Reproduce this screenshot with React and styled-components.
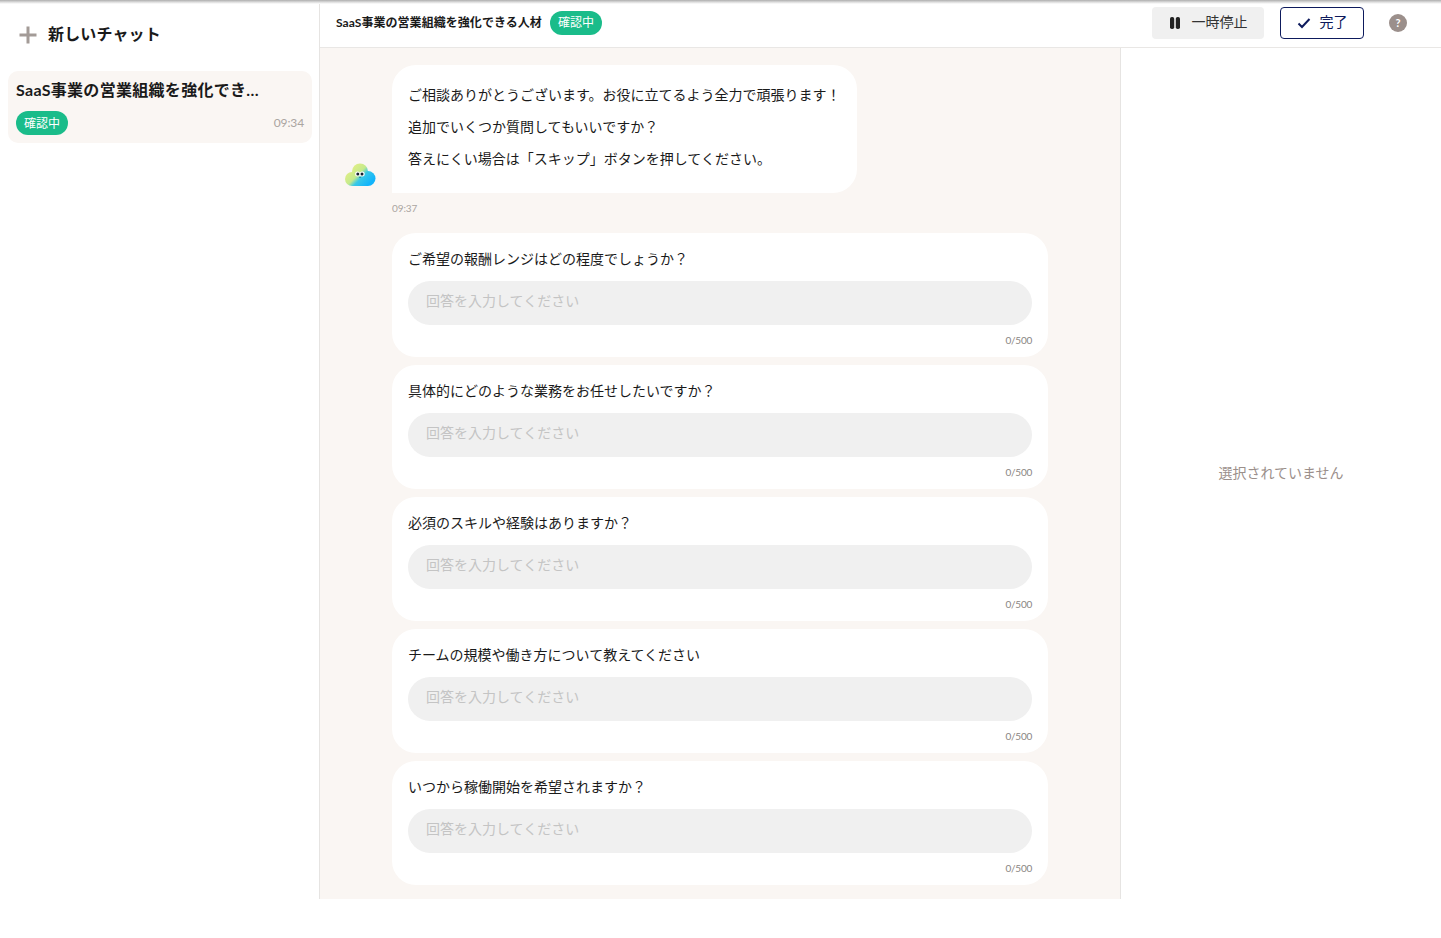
import React from "react";
import styled, { createGlobalStyle } from "styled-components";

const Global = createGlobalStyle`
  html, body { margin: 0; padding: 0; background: #fff; }
  body { font-family: Lato, "Noto Sans CJK JP", sans-serif; color: #1a1a1a; }
  * { box-sizing: border-box; }
`;

const Page = styled.div`
  width: 1441px;
  height: 938px;
  position: relative;
  background: #fff;
`;
const TopShade = styled.div`
  position: absolute;
  inset: 0 0 auto 0;
  height: 4px;
  background: linear-gradient(#aeaeae, #dedede 55%, #fff);
  z-index: 2;
`;
const Shell = styled.div`
  display: flex;
  height: 899px;
`;
const Sidebar = styled.aside`
  width: 320px;
  flex: none;
  border-right: 1px solid #e6e4e2;
  padding: 0 8px;
`;
const NewChat = styled.div`
  height: 71px;
  display: flex;
  align-items: center;
  gap: 10px;
  padding: 0 0 6px 10px;
  font-size: 16px;
  font-weight: 700;
  letter-spacing: 0.15px;
  color: #1a1a1a;
`;
const PlusSlot = styled.span`
  display: flex;
  margin-top: 4px;
`;
const ThreadCard = styled.div`
  height: 72px;
  width: 304px;
  border-radius: 10px;
  background: #faf6f3;
  padding: 8px;
`;
const ThreadTitle = styled.div`
  font-size: 16px;
  font-weight: 700;
  line-height: 22px;
  letter-spacing: 0.3px;
  white-space: nowrap;
`;
const ThreadMeta = styled.div`
  display: flex;
  align-items: center;
  justify-content: space-between;
  margin-top: 10px;
`;
const Time = styled.span`
  font-size: 12px;
  letter-spacing: -0.1px;
  padding-bottom: 2px;
  color: #aaa5a1;
`;
const Badge = styled.span`
  display: inline-flex;
  align-items: center;
  justify-content: center;
  width: 52px;
  height: 24px;
  padding-bottom: 2px;
  border-radius: 12px;
  background: #1abc8a;
  color: #fff;
  font-size: 12px;
`;
const Main = styled.main`
  flex: 1;
  display: flex;
  flex-direction: column;
  min-width: 0;
`;
const Header = styled.header`
  height: 48px;
  flex: none;
  border-bottom: 1px solid #e9e7e5;
  display: flex;
  align-items: center;
  padding: 0 0 2px 16px;
`;
const HeaderTitle = styled.div`
  font-size: 12px;
  font-weight: 700;
  margin-right: 8px;
  padding-bottom: 2px;
  letter-spacing: 0.05px;
`;
const Spacer = styled.div`
  flex: 1;
`;
const PauseButton = styled.div`
  width: 112px;
  height: 32px;
  background: #f0f0f0;
  border-radius: 4px;
  display: flex;
  align-items: center;
  justify-content: center;
  gap: 11px;
  font-size: 14px;
  color: #333;
  margin-right: 16px;
`;
const DoneButton = styled.div`
  width: 84px;
  height: 32px;
  border: 1px solid #0d1a5c;
  border-radius: 4px;
  display: flex;
  align-items: center;
  justify-content: center;
  gap: 9px;
  font-size: 14px;
  color: #0d1a5c;
  margin-right: 25px;
`;
const ButtonLabel = styled.span`
  padding-bottom: 4px;
`;
const HelpIcon = styled.div`
  width: 18px;
  height: 18px;
  border-radius: 50%;
  background: #9b8f8b;
  color: #fff;
  font-size: 11px;
  font-weight: 700;
  display: flex;
  align-items: center;
  justify-content: center;
  margin-right: 34px;
`;
const Body = styled.div`
  flex: 1;
  display: flex;
  min-height: 0;
`;
const Chat = styled.section`
  width: 801px;
  background: #faf6f3;
  border-right: 1px solid #e6e4e2;
  padding: 17px 0 0 24px;
`;
const BotRow = styled.div`
  display: flex;
  align-items: flex-end;
  gap: 16px;
`;
const Bubble = styled.div`
  width: 465px;
  height: 128px;
  background: #fff;
  border-radius: 24px 24px 24px 0;
  padding: 14px 16px;
  font-size: 14px;
  line-height: 32px;
  color: #1a1a1a;
`;
const BubbleTime = styled.div`
  margin: 9px 0 0 48px;
  height: 12px;
  line-height: 12px;
  font-size: 10px;
  letter-spacing: -0.1px;
  color: #aaa5a1;
`;
const Questions = styled.div`
  margin: 19px 0 0 48px;
  width: 656px;
  display: flex;
  flex-direction: column;
  gap: 8px;
`;
const QuestionCard = styled.div`
  height: 124px;
  background: #fff;
  border-radius: 24px;
  padding: 14px 16px 0;
`;
const QuestionText = styled.div`
  font-size: 14px;
  line-height: 24px;
  color: #1a1a1a;
`;
const AnswerField = styled.div`
  margin-top: 10px;
  height: 44px;
  border-radius: 22px;
  background: #f0f0f0;
  padding: 0 18px 6px;
  display: flex;
  align-items: center;
  font-size: 14px;
  color: #c4c4c4;
`;
const Counter = styled.div`
  margin-top: 8px;
  text-align: right;
  font-size: 10px;
  line-height: 14px;
  letter-spacing: -0.25px;
  color: #8a8582;
`;
const Detail = styled.aside`
  flex: 1;
  display: flex;
  align-items: center;
  justify-content: center;
  padding-bottom: 4px;
  font-size: 14px;
  color: #9b8f8b;
`;

const Cloud = () => (
  <svg width="32" height="26" viewBox="0 0 32 26" style={{ flex: "none", marginBottom: 7 }}>
    <defs>
      <linearGradient id="cl" gradientUnits="userSpaceOnUse" x1="5" y1="6" x2="24" y2="25">
        <stop offset="0" stopColor="#e8ef84" />
        <stop offset="0.46" stopColor="#c4ea8c" />
        <stop offset="0.64" stopColor="#38c8e8" />
        <stop offset="1" stopColor="#12b4fb" />
      </linearGradient>
    </defs>
    <g fill="url(#cl)">
      <circle cx="8" cy="19" r="7" />
      <circle cx="16" cy="11.500" r="8" />
      <circle cx="24" cy="18.500" r="7.500" />
      <rect x="8" y="12" width="16" height="14" />
    </g>
    <circle cx="13.600" cy="14" r="2.500" fill="#fff" />
    <circle cx="18.200" cy="14" r="2.500" fill="#fff" />
    <circle cx="13.800" cy="14" r="1.500" fill="#16202c" />
    <circle cx="18" cy="14" r="1.500" fill="#16202c" />
    <path d="M14.900 17.200c.4 1.200 1.800 1.200 2.200 0Z" fill="#1f6fa8" />
  </svg>
);

const Plus = () => (
  <svg width="20" height="20" viewBox="0 0 20 20">
    <path d="M10 1.500v17M1.500 10h17" stroke="#a39b97" strokeWidth="3" />
  </svg>
);
const Pause = () => (
  <svg width="12" height="12" viewBox="0 0 12 12">
    <rect x="1" y="0" width="4.200" height="12" rx="1.800" fill="#222" />
    <rect x="6.800" y="0" width="4.200" height="12" rx="1.800" fill="#222" />
  </svg>
);
const Check = () => (
  <svg width="14" height="12" viewBox="0 0 14 12">
    <path d="M1.500 6.500 5 10l7.500-8" fill="none" stroke="#0d1a5c" strokeWidth="2" />
  </svg>
);

const questions = [
  "ご希望の報酬レンジはどの程度でしょうか？",
  "具体的にどのような業務をお任せしたいですか？",
  "必須のスキルや経験はありますか？",
  "チームの規模や働き方について教えてください",
  "いつから稼働開始を希望されますか？",
];

export default function App() {
  return (
    <Page>
      <Global />
      <TopShade />
      <Shell>
        <Sidebar>
          <NewChat>
            <PlusSlot>
              <Plus />
            </PlusSlot>
            新しいチャット
          </NewChat>
          <ThreadCard>
            <ThreadTitle>SaaS事業の営業組織を強化でき…</ThreadTitle>
            <ThreadMeta>
              <Badge>確認中</Badge>
              <Time>09:34</Time>
            </ThreadMeta>
          </ThreadCard>
        </Sidebar>
        <Main>
          <Header>
            <HeaderTitle>SaaS事業の営業組織を強化できる人材</HeaderTitle>
            <Badge>確認中</Badge>
            <Spacer />
            <PauseButton>
              <Pause />
              <ButtonLabel>一時停止</ButtonLabel>
            </PauseButton>
            <DoneButton>
              <Check />
              <ButtonLabel>完了</ButtonLabel>
            </DoneButton>
            <HelpIcon>?</HelpIcon>
          </Header>
          <Body>
            <Chat>
              <BotRow>
                <Cloud />
                <Bubble>
                  <div>ご相談ありがとうございます。お役に立てるよう全力で頑張ります！</div>
                  <div>追加でいくつか質問してもいいですか？</div>
                  <div>答えにくい場合は「スキップ」ボタンを押してください。</div>
                </Bubble>
              </BotRow>
              <BubbleTime>09:37</BubbleTime>
              <Questions>
                {questions.map((q) => (
                  <QuestionCard key={q}>
                    <QuestionText>{q}</QuestionText>
                    <AnswerField>回答を入力してください</AnswerField>
                    <Counter>0/500</Counter>
                  </QuestionCard>
                ))}
              </Questions>
            </Chat>
            <Detail>選択されていません</Detail>
          </Body>
        </Main>
      </Shell>
    </Page>
  );
}
